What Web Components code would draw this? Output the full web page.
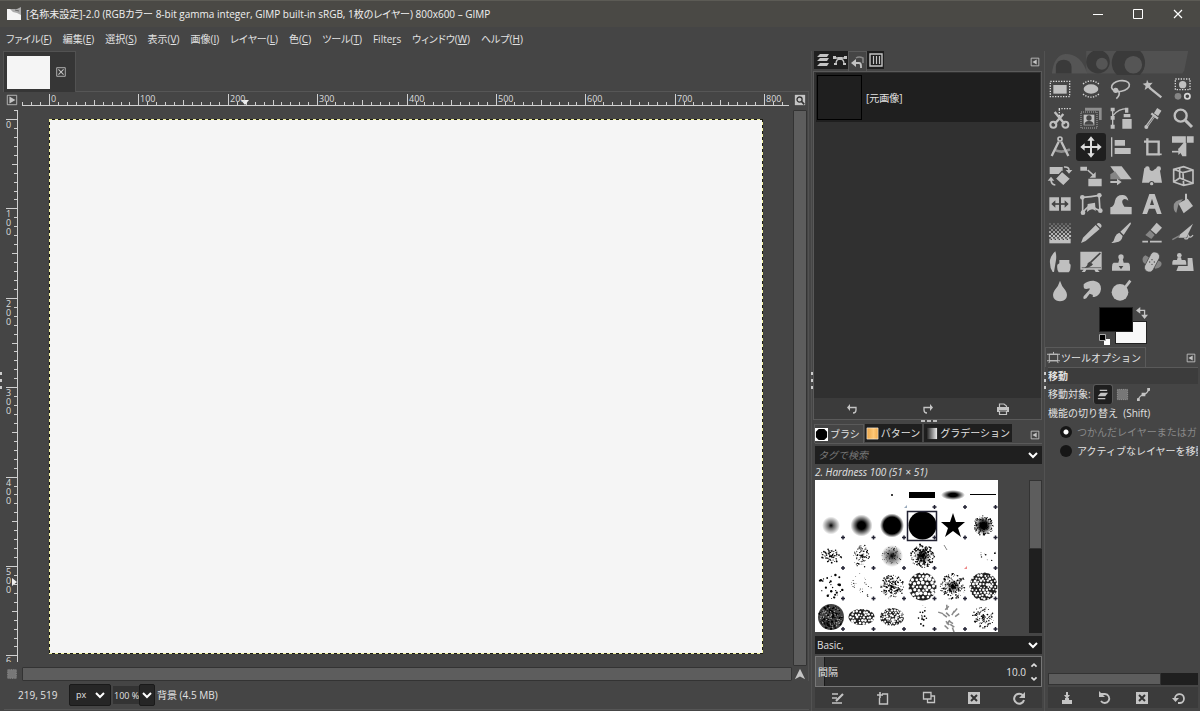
<!DOCTYPE html>
<html lang="ja">
<head>
<meta charset="utf-8">
<meta name="viewport" content="width=device-width, initial-scale=1">
<title>GIMP</title>
<style>
html,body{margin:0;height:100%}
body{background:#454545;color:#e2e2e2;font:10px/16px "Open Sans","Noto Sans CJK JP",sans-serif;
 --bg:#454545;--dark:#1f1f1f;--panel:#3b3b3b;--line:#5a5a5a;--ink:#bfbfbf;overflow:hidden}
</style>
</head>
<body>
<app-window>
  <title-bar slot="title">[名称未設定]-2.0 (RGBカラー 8-bit gamma integer, GIMP built-in sRGB, 1枚のレイヤー) 800x600 – GIMP</title-bar>
  <menu-bar slot="menu"></menu-bar>
  <image-view slot="image"></image-view>
  <side-dock slot="docks"><undo-history></undo-history><brush-panel></brush-panel></side-dock>
  <side-dock slot="docks"><tool-box></tool-box><tool-options></tool-options></side-dock>
</app-window>
<script>
const BASE = `*{box-sizing:border-box}
button,input,select{font:inherit;color:inherit;background:none;border:0;margin:0;padding:0;border-radius:0;outline:0;appearance:none}
button{display:flex;align-items:center;justify-content:center}`;
function define(name, css, html, setup) {
  const t = document.createElement('template');
  t.innerHTML = `<style>${BASE}${css}</style>${html}`;
  customElements.define(name, class extends HTMLElement {
    constructor() {
      super();
      this.attachShadow({mode: 'open'}).append(t.content.cloneNode(true));
    }
    connectedCallback() { if (setup) setup(this, this.shadowRoot); }
  });
}

/* Icons: three units to a pixel for the tools (72 = 24px), one unit to a pixel for the small set. */
const dots = (w, h, s) => `<rect x="${-w/2}" y="${-h/2}" width="${w}" height="${h}" fill="none" stroke="#d8d8d8" stroke-width="4" stroke-dasharray="4 ${s}"/>`;
const L = (d, w = 5, c = '#bfbfbf') => `<path d="${d}" fill="none" stroke="${c}" stroke-width="${w}"/>`;
const P = (d, c = '#bfbfbf') => `<path d="${d}" fill="${c}"/>`;
const C = (x, y, r, c = '#bfbfbf') => `<circle cx="${x}" cy="${y}" r="${r}" fill="${c}"/>`;
const BGC = '#454545', G = '#858585';
const checker = () => {
  let s = '';
  for (let y = 0; y < 8; y++) for (let x = 0; x < 11; x++) if ((x + y) % 2 == 0) {
    const k = 3 + y * .55;
    s += `<rect x="${-30 + x * 6 - k / 2}" y="${-27 + y * 6 - k / 2}" width="${k}" height="${k}" fill="#bfbfbf"/>`;
  }
  return s + P('M-32 17H32V31H-32Z') + '<path d="M-28 19H32" stroke="#454545" stroke-width="4" stroke-dasharray="4 8"/>';
};
const TOOLS = [
 ['矩形選択', dots(58, 46, 4) + P('M-20 -12H20V14H-20Z')],
 ['楕円選択', '<ellipse rx="22" ry="14" fill="#bfbfbf"/><path d="M-24 -15Q0 -34 24 -15M-24 15Q0 34 24 15" fill="none" stroke="#d8d8d8" stroke-width="4" stroke-dasharray="4 4"/>'],
 ['自由選択', '<ellipse cx="0" cy="-9" rx="27" ry="16" transform="rotate(-10)" fill="none" stroke="#bfbfbf" stroke-width="5"/>' + C(-16, 4, 8) + L('M-16 4Q-2 6 -6 18Q-8 24 -14 29')],
 ['ファジー選択', L('M-8 -4L28 25', 7) + P('M-15 -28L-10 -18L2 -19L-6 -10L-2 1L-12 -4L-22 3L-19 -9L-28 -16L-17 -18Z')],
 ['前景抽出選択', '<g transform="translate(-1 -14)">' + dots(44, 32, 4) + C(0, 1, 11) + '</g>' + C(-15, 22, 10, G) + '<circle cx="13" cy="22" r="8" fill="none" stroke="#d8d8d8" stroke-width="5"/>'],
 ['はさみ', L('M-16 -18L14 18M10 -12L-16 18', 7) + '<g fill="none" stroke="#bfbfbf" stroke-width="6"><circle cx="-20" cy="20" r="9"/><circle cx="16" cy="20" r="9"/></g>' + '<path d="M-4 -28H34M-2 -26V-6" fill="none" stroke="#d8d8d8" stroke-width="4" stroke-dasharray="4 4"/>'],
 ['前景抽出', P('M-18 -31H32V6H24V-22H-18Z', '#8e8e8e') + '<rect x="-30" y="-18" width="48" height="48" fill="none" stroke="#d8d8d8" stroke-width="2" stroke-dasharray="3 3"/>' + P('M-22 -10H10V22H-22Z') + C(-6, 0, 8, BGC) + P('M-20 20Q-18 8 -6 9Q6 8 8 20Z', BGC)],
 ['パス', L('M-25 -26V26M-24 -7Q-8 -28 18 -28', 4) + P('M-31 -31H-19V-20H-31ZM-31 -6H-19V5H-31ZM-31 20H-19V32H-31ZM12 -31H22V-16H12ZM8 -12H28V-2H8ZM4 3H32V32H4Z')],
 ['スポイト', L('M-18 28L8 -8', 8) + C(-17, 27, 6) + L('M12 -10L22 -26', 15) + L('M-2 -14L18 2', 7) + L('M-14 23L6 -4', 2, BGC)],
 ['ズーム', '<circle cx="-7" cy="-7" r="18" fill="none" stroke="#bfbfbf" stroke-width="7"/>' + L('M7 7L27 27', 9)],
 ['定規', '<circle cy="-24" r="6" fill="none" stroke="#bfbfbf" stroke-width="5"/>' + L('M-18 8Q4 20 30 7', 8, '#8c8c8c') + L('M-4 -16L-25 27M4 -16L25 27', 7)],
 ['移動', L('M-22 0H22M0 -22V22', 6, '#dedede') + P('M0 -32L11 -19H-11ZM0 32L11 19H-11ZM-32 0L-19 -11V11ZM32 0L19 -11V11Z', '#dedede')],
 ['整列', L('M-28 -29V29', 4) + P('M-19 -21H12V-4H-19ZM-19 3H29V21H-19Z')],
 ['切り抜き', '<path d="M-24 -16H20V22H-14V-26" fill="none" stroke="#bfbfbf" stroke-width="7"/>' + L('M20 22H29', 5)],
 ['統合変形', P('M-33 -32H32V-13H10V28H-2L-14 6L8 -20V-13H-33Z') + L('M10 -34V-12', 3, BGC) + L('M-33 14H-10', 5) + P('M-14 4L-3 14L-14 24Z')],
 ['回転', P('M-31 -27H8V-6H-31Z') + '<path d="M6 -14L32 8L10 30L-14 8Z" fill="#bfbfbf" stroke="#454545" stroke-width="4"/>' + L('M12 -27Q28 -28 27 -16M-27 10Q-27 26 -14 27', 5) + P('M17 -18H37L27 -7ZM-37 14H-17L-27 2Z')],
 ['拡大縮小', P('M-32 -28H-12V-16H-32ZM-8 8H32V31H-8Z') + L('M-10 -18L10 0', 5) + P('M14 -12V5H-4Z')],
 ['剪断変形', P('M-32 -29H2L32 10H-4Z') + P('M-32 -5L-18 -14L0 10H-32Z', G) + L('M-32 18H-8', 6) + P('M-12 8L2 18L-12 28Z')],
 ['ハンドル変形', P('M-23 -24L-8 -20Q0 -10 8 -20L22 -28L30 20H-30Z') + C(-14, -22, 7) + C(20, -22, 7) + C(-1, 23, 8, BGC) + C(-1, 23, 5)],
 ['遠近法', '<path d="M-28 -20L2 -28L30 -18V22L2 28L-28 18ZM-28 -20L0 -10L30 -18M0 -10L2 28M-10 -26V6L-28 18M-10 6L30 22" fill="none" stroke="#bfbfbf" stroke-width="5"/>'],
 ['反転', P('M-32 -20H-3V20H-32ZM3 -20H32V20H3Z') + L('M-20 0H20', 5, BGC) + P('M-26 0L-14 -11V11ZM26 0L14 -11V11Z', BGC)],
 ['ケージ変形', '<path d="M-25 -20Q0 -22 24 -26L27 20Q10 14 2 4Q-8 4 -25 26Z" fill="none" stroke="#bfbfbf" stroke-width="5"/>' + P('M-10 0L12 -4L14 22Q4 8 -12 24Z') + C(-26, -20, 7) + C(25, -26, 7) + C(28, 20, 7) + C(-24, 26, 7)],
 ['ワープ変形', P('M-32 31V10Q-20 8 -18 -10Q-14 -28 6 -27Q20 -25 22 -10Q14 -17 8 -14Q-2 -8 10 8L32 9V31Z')],
 ['テキスト', P('M-29 30L-8 -30H8L29 30H15L9 14H-9L-15 30ZM-6 3H6L0 -16Z')],
 ['塗りつぶし', P('M-14 -2L14 -16L30 6L2 28Z') + L('M9 -31V-4', 6) + P('M-28 8Q-28 -12 0 -14L-14 2L-20 26Q-28 22 -28 8Z', '#8e8e8e')],
 ['グラデーション', checker()],
 ['鉛筆', P('M14 -24L26 -12L-16 24L-30 30L-24 14ZM17 -26Q22 -34 29 -27Q35 -20 28 -15Z')],
 ['ブラシで描画', P('M28 -32L30 -28L8 6L-2 -4ZM-5 -1L5 9Q2 26 -14 28Q-22 31 -29 30Q-20 24 -18 12Q-14 2 -5 -1Z')],
 ['消しゴム', P('M14 -31L30 -16L12 4L-4 -10Z') + P('M-6 -8L8 6L-2 18L-20 6Z', G) + L('M-29 26H-12M-6 26H29', 5)],
 ['エアブラシ', P('M30 -28L10 14L-14 14L-8 4Z') + L('M-10 8L-32 20', 4, G) + L('M4 16Q16 22 16 8Q22 18 30 6', 4)],
 ['インクで描画', P('M-14 -32Q-10 -20 -12 -6L-18 30H-22Q-32 16 -30 -6Q-26 -22 -14 -32ZM-2 -6H28V4L32 8Q32 26 26 31H-4Q-10 24 -8 8L-2 4Z')],
 ['MyPaintブラシ', P('M-32 -31H32V23H20L26 30H14L10 23H-14L-18 30H-28L-22 23H-32Z') + L('M28 -27L-2 2', 5, BGC) + P('M-4 -1L6 7Q-2 18 -20 17Q-10 12 -10 4Z', BGC) + L('M-28 17H30', 2, BGC)],
 ['スタンプで描画', C(0, -15, 8) + P('M-5 -10H5L8 2H22Q27 4 27 14V26H-27V14Q-27 4 -22 2H-8Z') + P('M-7 12H7L0 22Z', BGC)],
 ['修復ブラシ', P('M-20 -20Q-32 -14 -27 0Q-22 8 -14 6L-6 -12ZM18 -4Q32 -2 28 10Q22 20 10 20L6 16Z', G) + '<g transform="rotate(-62)"><rect x="-32" y="-14" width="64" height="28" rx="13" fill="#bfbfbf" stroke="#454545" stroke-width="2"/></g>' + C(0, -7, 2, BGC) + C(7, 0, 2, BGC) + C(-7, 0, 2, BGC) + C(0, 7, 2, BGC)],
 ['遠近スタンプで描画', C(-11, -20, 7) + P('M-16 -14H-6L-4 -6H6Q10 -4 10 8H-32Q-33 -4 -28 -6H-18ZM14 -12H28L32 27H-20L-14 12H14Z')],
 ['ぼかし', P('M0 -31Q4 -16 16 -2Q24 10 19 21Q12 31 0 31Q-12 31 -19 21Q-24 10 -16 -2Q-4 -16 0 -31Z')],
 ['にじみ', P('M-22 -20Q-10 -32 8 -31Q30 -28 30 -6Q28 14 10 18Q2 18 6 12L-4 8L-14 22Q-26 28 -22 16L-10 2Q-2 -4 -4 -8Q-22 -2 -22 -12Z')],
 ['暗室', C(-3, 4, 25) + L('M12 -10L28 -31', 8)]
];
const S = (d, w = 1.5) => `<path d="${d}" fill="none" stroke="currentColor" stroke-width="${w}"/>`;
const F = d => `<path d="${d}" fill="currentColor"/>`;
const SMALL = {
 chev: S('M3 5L7 9L11 5', 2), chevU: S('M4 9L7 6L10 9', 2), chevD: S('M4 5L7 8L10 5', 2),
 menu: S('M2.500 2.500H11.500V11.500H2.500Z', 1) + F('M9 4V10L4 7Z'),
 play: S('M1.500 1.500H12.500V12.500H1.500Z', 1) + F('M4 3V11L11 7Z'),
 close: S('M2 2H12V12H2Z', 1) + S('M4 4L10 10M10 4L4 10', 1.2),
 zoom: F('M1 1H13V13H1Z') + '<circle cx="6.500" cy="6.500" r="3" fill="none" stroke="#333" stroke-width="1.500"/><path d="M9 9L12 12" stroke="#333" stroke-width="2"/>',
 mask: '<rect x="2" y="2" width="10" height="10" fill="#777" stroke="#999" stroke-dasharray="1 1"/>',
 nav: F('M7 1L13 13L7 10L1 13Z'),
 layers: F('M4 1H13L11 4H1ZM4 5H13L11 8H1ZM4 10H13L11 13H1Z'),
 paths: S('M1 5H13M3 11Q3 6 7 6Q11 6 11 11', 1.3) + F('M0 3H3V6H0ZM11 3H14V6H11ZM5 4H9V7H5ZM1 10H4V12H1ZM10 10H13V12H10Z'),
 history: S('M3 8H8Q10 8 10 11V13', 1.8) + F('M5 4V12L0 8Z') + '<path d="M5 3Q8 1 12 3V8" stroke="#888" fill="none" stroke-width="1.500"/>',
 buffer: S('M1 1H13V13H1Z', 1.4) + S('M4.500 3V11M7.500 3V11M10.500 3V11', 1.2),
 undo: S('M3 5.500H11V8Q11 11 8 11', 1.3) + F('M5 2V9L2 5.500Z'),
 redo: S('M11 5.500H3V8Q3 11 6 11', 1.3) + F('M9 2V9L12 5.500Z'),
 printer: S('M3.500 5V2H8L10.500 4V5', 1.2) + F('M1 5H13V10H11V8H3V10H1Z') + S('M3.500 9V12.500H10.500V9Z', 1.2),
 edit: S('M1 3H7M1 7H6M1 12H11', 1.6) + S('M5 10L12 3', 2.2),
 fresh: S('M6 3H11.500V13H3.500V7', 1.4) + S('M1 4H7M4 1V7', 1.6),
 copy: S('M1.500 1.500H9V8H1.500Z', 1.3) + S('M9 5H12.500V11.500H5.500V8', 1.3),
 del: F('M1 1H13V13H1Z') + '<path d="M4 4L10 10M10 4L4 10" stroke="#333" stroke-width="2"/>',
 reload: S('M11 4.500A5 5 0 1 0 12 9', 2) + F('M13 1V7H7Z'),
 back: S('M4 3H8A4.500 4.500 0 1 1 4 10', 1.8) + F('M2 0V6H8Z'),
 reset: S('M6 12H8A4.500 4.500 0 1 0 3 8', 1.8) + F('M0 7H7L3.500 11Z'),
 save: F('M6 1H8V4H10L7 8L4 4H6ZM5 7H9V9H12V13H2V9H5Z'),
 screen: S('M2.500 3.500H11.500V10.500H2.500ZM0 3.500H14M0 10.500H14M3 11L2 13M11 11L12 13M7 1V3', 1),
 layer: F('M5 5H13L10 9H2Z') + S('M4 2.500H12M2 11.500H10', 1.2),
 sel: '<rect x="1.500" y="1.500" width="11" height="11" fill="#777" stroke="#999" stroke-dasharray="1 1"/>',
 curve: S('M1 13Q3 8 7 7Q11 6 13 1', 1.3) + F('M5 5H9V9H5ZM11 0H14V3H11ZM0 11H3V14H0Z'),
 brush: '<path d="M0 0H14V14H0Z" fill="#fff"/><path d="M4 1H10L13 4V10L10 13H4L1 10V4Z" fill="#000"/>',
 pattern: '<defs><linearGradient id="g"><stop stop-color="#e9a448"/><stop offset=".6" stop-color="#ffc978"/><stop offset="1" stop-color="#f0a94a"/></linearGradient></defs><path d="M1 1H13V13H1Z" fill="url(#g)" stroke="#fff" stroke-width=".6"/>',
 grad: '<defs><linearGradient id="g"><stop stop-color="#111"/><stop offset="1" stop-color="#eee"/></linearGradient></defs><path d="M1 1H13V13H1Z" fill="url(#g)"/>',
 swap: S('M3 4H10V11', 1.5) + F('M5 0V8L0 4ZM6 9H14L10 14Z'),
 wilber: '<path d="M0 2H14V13H0Z" fill="#f4f4f4"/><path d="M3 2L6 5L10 6L14 8V0L10 2Z" fill="#aaa"/><path d="M8 3L12 4" stroke="#666"/>'
};
define('ui-icon', ':host{display:block;width:14px;height:14px;flex:none;color:#c4c4c4}svg{display:block;width:100%;height:100%}', '<svg viewBox="0 0 14 14" aria-hidden="true"></svg>',
  (h, r) => r.querySelector('svg').innerHTML = SMALL[h.getAttribute('name')]);

define('app-window', `:host{display:flex;flex-direction:column;min-height:100vh;border-top:1px solid #5c5b55}
main{flex:1;display:grid;grid-template-columns:minmax(0,1fr) 233px 156px;min-height:0}`,
 '<slot name="title"></slot><slot name="menu"></slot><main><slot name="image"></slot><slot name="docks"></slot></main>');

define('title-bar', `:host{display:flex;align-items:center;height:26px;padding:0 2px 0 7px;background:#4a4945;color:#f0f0f0}
.ic{margin-right:5px}h1{font:inherit;margin:0;flex:1;white-space:nowrap;font-feature-settings:"palt"}
button{width:40px;height:26px}svg{width:12px;height:12px;fill:none;stroke:#fff}`,
 `<ui-icon class="ic" name="wilber"></ui-icon><h1><slot></slot></h1>
 <button aria-label="最小化"><svg viewBox="0 0 12 12"><path d="M1 6.500H11"/></svg></button>
 <button aria-label="最大化"><svg viewBox="0 0 12 12"><path d="M1.500 1.500H10.500V10.500H1.500Z"/></svg></button>
 <button aria-label="閉じる"><svg viewBox="0 0 12 12"><path d="M2 2L10 10M10 2L2 10" stroke-width="1.200"/></svg></button>`);

define('menu-bar', `:host{display:block;height:24px}nav{display:flex;gap:11px;padding:4px 6px}
button{white-space:nowrap;font-feature-settings:"palt"}`,
 '<nav>' + ['ファイル(<u>F</u>)','編集(<u>E</u>)','選択(<u>S</u>)','表示(<u>V</u>)','画像(<u>I</u>)','レイヤー(<u>L</u>)','色(<u>C</u>)','ツール(<u>T</u>)','Filte<u>r</u>s','ウィンドウ(<u>W</u>)','ヘルプ(<u>H</u>)'].map(t => `<button><span>${t}</span></button>`).join('') + '</nav>');

/* A ruler: ticks every 10 image pixels, a label every 100. Upright rulers stack the digits of a label. */
define('ruler-bar', `:host{display:block;position:relative;min-width:0;min-height:0}
:host([vertical]){overflow:hidden}
svg{display:block;position:absolute;width:100%;height:100%}
span{position:absolute;font:9px/9px "Open Sans",sans-serif;color:#dcdcdc}
:host([vertical]) span{width:6px;word-break:break-all}`,
 '<svg></svg>', (h, r) => {
  const vert = h.hasAttribute('vertical'), origin = +h.getAttribute('origin'), mark = +h.getAttribute('mark'), k = .894;
  const line = (p, a, b) => vert ? `M${a} ${p}H${b}` : `M${p} ${a}V${b}`;
  let d = '';
  for (let u = -30; u < 3000; u += 10) {
    const p = Math.round(origin + u * k);
    if (p < 0) continue;
    d += line(p + .5, u % 100 == 0 ? 0 : u % 50 == 0 ? 6 : 8, 12);
    if (u % 100 || u < 0 || u > (vert ? 600 : 800)) continue;
    const s = document.createElement('span');
    s.textContent = u;
    s.style.left = (vert ? 0 : p + 2) + 'px';
    s.style.top = (vert ? p + 1 : 0) + 'px';
    r.append(s);
  }
  r.querySelector('svg').innerHTML = `<path d="${d}${vert ? 'M11.500 0V3000' : 'M0 11.500H3000'}" stroke="#d0d0d0" fill="none"/><path fill="#eee" d="${vert ? `M6 ${mark - 4}V${mark + 4}L11 ${mark}Z` : `M${mark - 4} 6H${mark + 4}L${mark} 11Z`}"/>`;
 });

define('image-view', `:host{display:flex;flex-direction:column;min-width:0;padding:0 2px 2px 4px;position:relative}
.tabs{display:flex;height:41px;border-bottom:1px solid #565656}
.tab{width:73px;height:41px;margin-left:-1px;background:#363636;border:1px solid #525252;border-bottom:0;display:flex;align-items:center;gap:5px;padding-left:3px}
.thumb{width:43px;height:33px;background:#f5f5f5}.tab ui-icon{width:12px;height:12px}
.grid{flex:1;display:grid;grid-template:16px minmax(0,1fr) 15px/16px minmax(0,1fr) 16px;border:solid #525252;border-width:0 1px 0 0;min-height:0}
.corner{padding:2px 0 0 2px;width:14px}.corner ui-icon{width:12px;height:12px}
.h{margin:2px 3px 2px 2px}.v{margin:2px 2px 4px 2px}
.work{padding:11px 29px 12px 29px;display:flex}
.paper{flex:1;background:repeating-conic-gradient(#1c1c10 0 25%,#f0f0a0 0 50%) 0 0/6px 6px;padding:1px}
.paper div{height:100%;background:#f5f5f5}
.sb{background:#5d5d5d;border:1px solid #333;border-radius:1px}.sv{margin:2px 1px 0 1px}.sh{margin:1px 0 0 2px}
.status{display:flex;align-items:center;height:29px;padding-left:14px;border-bottom:1px solid #555}
.pos{width:51px}.box{background:#262626;border:1px solid #1a1a1a;border-radius:2px;height:22px}
.unit{position:relative;width:42px}.unit select{width:100%;height:100%;padding-left:6px;font-size:9px}.unit ui-icon{position:absolute;right:3px;top:3px;pointer-events:none}
ui-icon.w{color:#fff}.z{width:26px;height:18px;margin-left:2px;background:#333;padding-left:1px;font-size:9px}.zb{width:16px;margin-right:2px}
.grip{position:absolute;left:0;top:321px;width:2px;height:17px;background:repeating-linear-gradient(#ccc 0 3px,transparent 3px 7px)}`,
 `<div class="tabs"><div class="tab"><div class="thumb"></div><button aria-label="閉じる"><ui-icon name="close"></ui-icon></button></div></div>
 <div class="grid">
  <div class="corner"><ui-icon name="play"></ui-icon></div><ruler-bar class="h" origin="27" mark="223"></ruler-bar><div class="corner"><ui-icon name="zoom"></ui-icon></div>
  <ruler-bar class="v" vertical origin="9" mark="472"></ruler-bar><div class="work"><div class="paper"><div></div></div></div><div class="sb sv"></div>
  <div class="corner"><ui-icon name="mask"></ui-icon></div><div class="sb sh"></div><div class="corner"><ui-icon name="nav"></ui-icon></div>
 </div>
 <div class="status"><span class="pos">219, 519</span><span class="unit box"><select aria-label="単位"><option>px</option></select><ui-icon class="w" name="chev"></ui-icon></span>
 <input class="z" aria-label="ズーム" value="100 %"><button class="zb box" aria-label="ズーム一覧"><ui-icon class="w" name="chev"></ui-icon></button><span>背景 (4.5 MB)</span></div>
 <div class="grip"></div>`);

define('side-dock', `:host{display:flex;flex-direction:column;min-width:0;min-height:0;position:relative;border-left:1px solid #525252;padding:0 2px 3px 3px;border-bottom:1px solid #555}
.grip{position:absolute;left:-1px;top:321px;width:2px;height:17px;background:repeating-linear-gradient(#ccc 0 3px,transparent 3px 7px)}`, '<slot></slot><div class="grip"></div>');

const BAR = `.bar{display:flex;height:21px;align-items:center;background:var(--panel)}.bar button{flex:1}
.tabs{display:flex;height:20px}.tabs .m{margin:5px 1px 0 auto;width:12px;height:12px}.m ui-icon{width:12px;height:12px}
.tab{height:18px;background:var(--dark);white-space:nowrap}.on{height:20px;background:var(--bg);border:1px solid #5a5a5a;border-bottom:0}`;
const bar = a => '<div class="bar">' + a.map(([n, t]) => `<button aria-label="${t}"><ui-icon name="${n}"></ui-icon></button>`).join('') + '</div>';

define('undo-history', BAR + `:host{display:flex;flex-direction:column;height:369px}
.tabs{margin-left:-1px}.tab{width:17px}.on{width:19px}
.body{flex:1;display:flex;flex-direction:column;border:1px solid #5a5a5a;margin-left:-2px}
ul{list-style:none;margin:0;padding:1px 1px 0 2px;flex:1;background:#303030}
li{display:flex;align-items:center;gap:4px;height:49px;background:var(--dark);padding-left:1px}
.th{width:45px;height:45px;border:1px solid #000}`,
 `<div class="tabs"><button class="tab" aria-label="レイヤー"><ui-icon name="layers"></ui-icon></button><button class="tab" aria-label="パス"><ui-icon name="paths"></ui-icon></button><button class="tab on" aria-label="作業履歴"><ui-icon name="history"></ui-icon></button><button class="tab" aria-label="バッファー"><ui-icon name="buffer"></ui-icon></button><button class="m" aria-label="設定"><ui-icon name="menu"></ui-icon></button></div>
 <div class="body"><ul><li><span class="th"></span>[元画像]</li></ul>${bar([['undo','元に戻す'],['redo','やり直す'],['printer','履歴の消去']])}</div>`);

/* Brush thumbnails: 6 x 5 cells, 30.5 units each. */
function brushes() {
  let seed = 7;
  const rnd = () => (seed = (seed * 16807) % 2147483647) / 2147483647;
  const X = c => 16 + c * 30.5, Y = r => 15 + r * 30.5;
  let s = '<defs><radialGradient id="s"><stop stop-color="#000"/><stop offset=".3" stop-color="#000" stop-opacity=".6"/><stop offset="1" stop-color="#000" stop-opacity="0"/></radialGradient><radialGradient id="m"><stop offset=".35" stop-color="#000"/><stop offset="1" stop-color="#000" stop-opacity="0"/></radialGradient><radialGradient id="h"><stop offset=".7" stop-color="#000"/><stop offset="1" stop-color="#000" stop-opacity="0"/></radialGradient></defs>';
  const ball = (c, r, rad, g) => s += `<circle cx="${X(c)}" cy="${Y(r)}" r="${rad}" fill="${g}"/>`;
  const spray = (c, r, n, rx, ry, max, pow = .7, fill = '#000') => {
    for (let i = 0; i < n; i++) {
      const a = rnd() * 6.283, q = Math.pow(rnd(), pow);
      s += `<circle cx="${(X(c) + Math.cos(a) * q * rx).toFixed(1)}" cy="${(Y(r) + Math.sin(a) * q * ry).toFixed(1)}" r="${(.3 + rnd() * max).toFixed(1)}" fill="${fill}"/>`;
    }
  };
  /* Irregular white pebbles on a dark disc. */
  const cells = (c, r, rx, ry, step, rad) => {
    s += `<ellipse cx="${X(c)}" cy="${Y(r)}" rx="${rx}" ry="${ry}" fill="#222"/>`;
    let row = 0;
    for (let y = -ry; y <= ry; y += step * .85, row++) for (let x = -rx + (row % 2) * step / 2; x <= rx; x += step)
      if ((x / rx) ** 2 + (y / ry) ** 2 < 1.1) s += `<circle cx="${(X(c) + x + (rnd() - .5) * 1.4).toFixed(1)}" cy="${(Y(r) + y + (rnd() - .5) * 1.4).toFixed(1)}" r="${(rad + rnd() * .7).toFixed(1)}" fill="#fff"/>`;
  };
  ball(2, 0, 1, '#000');
  s += `<path d="M94 12H120V18H94Z"/><ellipse cx="138" cy="15" rx="12" ry="5" fill="url(#m)"/><path d="M155 14.500H181" stroke="#000"/>`;
  ball(0, 1, 9, 'url(#s)'); ball(1, 1, 11, 'url(#m)'); ball(2, 1, 12, 'url(#h)'); ball(3, 1, 14, '#000');
  s += '<path d="M92.500 31.500H121.500V60.500H92.500Z" fill="none" stroke="#223" stroke-width="1.500"/><path d="M138 33L141 42H150L143 48L146 57L138 51L130 57L133 48L126 42H135Z"/>';
  ball(5, 1, 9, 'url(#m)'); spray(5, 1, 160, 10, 10, .4, .6);
  spray(0, 2, 90, 11, 7, .6, 1); spray(1, 2, 110, 8, 12, .4, .8); ball(2, 2, 11, 'url(#s)'); spray(2, 2, 80, 10, 10, .2);
  ball(3, 2, 8, 'url(#s)'); spray(3, 2, 230, 12, 12, .6, .8);
  s += '<path d="M129 65L132 70" stroke="#888"/>'; spray(5, 2, 9, 13, 12, .7);
  spray(0, 3, 28, 13, 13, 1, .5); spray(1, 3, 24, 13, 13, .3, .5); spray(2, 3, 190, 12, 12, .5, .8);
  cells(3, 3, 14, 14, 4.2, 1.2); ball(4, 3, 7, 'url(#s)'); spray(4, 3, 220, 13, 13, .5, .8); cells(5, 3, 14, 14, 3.4, .8);
  ball(0, 4, 13, '#444'); spray(0, 4, 120, 12, 12, .9, .5); spray(0, 4, 60, 11, 11, .5, .5, '#aaa');
  cells(1, 4, 13, 8, 3.4, .8); cells(2, 4, 12, 9, 2.6, .6); spray(3, 4, 16, 4, 13, .7, .5);
  for (let i = 0; i < 14; i++) {
    const a = rnd() * 6.283, x = X(4) + (rnd() - .5) * 20, y = Y(4) + (rnd() - .5) * 22;
    s += `<path d="M${x.toFixed(1)} ${y.toFixed(1)}l${(Math.cos(a) * 5).toFixed(1)} ${(Math.sin(a) * 5).toFixed(1)}" stroke="#888" stroke-width="1.500"/>`;
  }
  spray(5, 4, 110, 11, 11, .5, .9);
  for (let r = 0; r < 5; r++) for (let c = 0; c < 6; c++) {
    if ((r == 0 && c < 3) || (r == 2 && c == 4)) continue;
    s += `<path d="M${X(c) + 10} ${Y(r) + 12}h4m-2 -2v4" stroke="#223" stroke-width="1.500"/>`;
  }
  return s + '<path d="M92 25V28H89Z" fill="#9ab"/><path d="M152 86V89H149Z" fill="#e88"/>';
}
define('brush-panel', BAR + `:host{display:flex;flex-direction:column;flex:1;position:relative;padding-top:4px;min-height:0}
.dots{position:absolute;left:50%;margin-left:-8px;top:0;width:17px;height:2px;background:repeating-linear-gradient(90deg,#bbb 0 4px,transparent 4px 6px)}
.tabs{height:19px;margin-left:-1px}.tab{padding:0 2px 0 1px;gap:2px;margin-right:2px}.tab.on{height:19px;margin-right:1px;padding:0 3px 0 0}
.tab ui-icon{width:13px;height:13px}
.body{flex:1;display:flex;flex-direction:column;border-top:1px solid #5a5a5a;padding:2px 0 0;background:var(--bg);min-height:0}
.combo{display:flex;align-items:center;height:18px;background:var(--dark);padding:0 2px 0 3px;flex:none}
.tag{margin-top:3px;padding-left:2px}
.combo input,.combo select{flex:1;min-width:0;height:100%}.combo ui-icon{color:#fff}
.combo select{margin-right:-14px}.combo select+ui-icon{pointer-events:none}
input::placeholder{color:#777;font-style:italic;opacity:1}
.name{font-style:italic;line-height:16px;height:16px;white-space:nowrap}
.gridrow{display:flex;justify-content:space-between;flex:1;min-height:0}
svg.b{width:183px;height:152px;background:#fff;display:block}
.track{width:13px;background:var(--dark)}.track div{height:69px;background:#5d5d5d;border:1px solid #333}
.spin{display:flex;align-items:center;height:31px;flex:none;margin:2px 0 0;border:1px solid #777;background:linear-gradient(90deg,#555 8px,#1a1a1a 8px 9px,#303030 9px);padding-left:2px}
.spin label{flex:1}.spin input{width:40px;text-align:right}.spin div{width:13px;margin-left:2px}.spin button{width:12px;height:14px}.spin ui-icon{width:12px;height:12px;color:#ddd}
.bar{flex:none}`,
 `<div class="dots"></div><div class="tabs"><button class="tab on"><ui-icon name="brush"></ui-icon><span>ブラシ</span></button><button class="tab"><ui-icon name="pattern"></ui-icon><span>パターン</span></button><button class="tab"><ui-icon name="grad"></ui-icon><span>グラデーション</span></button><button class="m" aria-label="設定"><ui-icon name="menu"></ui-icon></button></div>
 <div class="body"><div class="combo"><input aria-label="タグで検索" placeholder="タグで検索"><ui-icon name="chev"></ui-icon></div>
 <div class="name">2. Hardness 100 (51 × 51)</div>
 <div class="gridrow"><svg class="b" viewBox="0 0 183 152"></svg><div class="track"><div></div></div></div>
 <div class="combo tag"><select aria-label="タグ"><option>Basic,</option></select><ui-icon name="chev"></ui-icon></div>
 <div class="spin"><label for="sp">間隔</label><input id="sp" value="10.0"><div><button aria-label="増やす"><ui-icon name="chevU"></ui-icon></button><button aria-label="減らす"><ui-icon name="chevD"></ui-icon></button></div></div>
 ${bar([['edit','編集'],['fresh','新規'],['copy','複製'],['del','削除'],['reload','更新']])}</div>`,
 (h, r) => r.querySelector('svg.b').innerHTML = brushes());

define('tool-box', `:host{display:block;height:296px}
.logo{display:block;height:24px;width:100%}
.tools{display:grid;grid-template:repeat(8,1fr)/repeat(5,1fr);height:230px;margin:0 0 0 -3px}
.tools button{border-radius:3px}.tools button.on{background:var(--dark)}.tools svg{width:24px;height:24px;overflow:visible}
.colors{display:block;width:48px;height:40px;margin:2px auto 0;position:relative}
.colors button{position:absolute;border:1px solid #222}.bg{left:16px;top:14px;width:32px;height:23px;background:#f8f8f8}.fg{left:0;top:0;width:34px;height:25px;background:#000}
.colors .sw{border:0;left:37px;top:0}.colors .sw ui-icon{width:12px;height:12px}.colors .df{border:0;left:0;top:27px;width:11px;height:10px}`,
 `<svg class="logo" viewBox="0 0 153 24" preserveAspectRatio="xMinYMin"><path d="M39 0H143L139 20L137 23H39Z" fill="#515151"/><path d="M4 23Q6 4 18 3Q34 3 40 23Z" fill="#555"/><g fill="#3a3a3a"><circle cx="51" cy="11" r="12"/><circle cx="82" cy="12" r="17"/><path d="M8 23V16Q9 9 16 9Q23 9 24 16V23Z"/></g><circle cx="55" cy="13" r="6" fill="#555"/><circle cx="87" cy="14" r="9" fill="#555"/></svg>
 <div class="tools">${TOOLS.map(([n, s], i) => `<button aria-label="${n}"${i == 11 ? ' class="on"' : ''}><svg viewBox="-36 -36 72 72">${s}</svg></button>`).join('')}</div>
 <div class="colors"><button class="bg" aria-label="背景色"></button><button class="fg" aria-label="描画色"></button><button class="sw" aria-label="入れ替え"><ui-icon name="swap"></ui-icon></button><button class="df" aria-label="リセット"><svg width="11" height="11"><path d="M5 5H11V11H5Z" fill="#fff"/><path d="M.5 .5H6.500V6.500H.5Z" fill="#000" stroke="#aaa"/></svg></button></div>`);

define('tool-options', BAR + `:host{display:flex;flex-direction:column;flex:1;min-height:0}
.tab.on{gap:1px;padding:0 4px 0 1px;margin-left:-3px}.tab ui-icon{width:13px;height:13px}
.body{flex:1;display:flex;flex-direction:column;border-top:1px solid #5a5a5a;overflow:hidden}
h2{font:bold 10px/16px "Open Sans","Noto Sans CJK JP",sans-serif;margin:0;background:#3c3c3c}
.row{display:flex;align-items:center;height:20px;gap:7px}.row button{width:14px}.row button.on{width:20px;height:20px;background:var(--dark);border-radius:3px;margin:0 -4px 0 -5px}
.row button ui-icon{width:13px;height:13px}.lab{line-height:18px}
label{display:flex;align-items:center;gap:5px;height:19px;white-space:nowrap;padding-left:12px}
input{width:12px;height:12px;border-radius:50%;background:#161616;flex:none}input:checked{background:radial-gradient(circle,#fff 0 2px,#161616 3px)}
.dim{color:#8a8a8a}.track{margin:auto 0 2px;height:12px;background:var(--dark)}.track div{width:75%;height:100%;background:#5d5d5d;border:1px solid #333}`,
 `<div class="tabs"><button class="tab on"><ui-icon name="screen"></ui-icon><span>ツールオプション</span></button><button class="m" aria-label="設定"><ui-icon name="menu"></ui-icon></button></div>
 <div class="body"><h2>移動</h2><div class="row"><span>移動対象:</span><button class="on" aria-label="レイヤー"><ui-icon name="layer"></ui-icon></button><button aria-label="選択範囲"><ui-icon name="sel"></ui-icon></button><button aria-label="パス"><ui-icon name="curve"></ui-icon></button></div>
 <div class="lab">機能の切り替え&nbsp; (Shift)</div>
 <label class="dim"><input type="radio" name="t" checked>つかんだレイヤーまたはガ</label><label><input type="radio" name="t">アクティブなレイヤーを移動</label>
 <div class="track"><div></div></div></div>${bar([['save','保存'],['back','復元'],['del','削除'],['reset','リセット']])}`);
</script>
</body>
</html>
